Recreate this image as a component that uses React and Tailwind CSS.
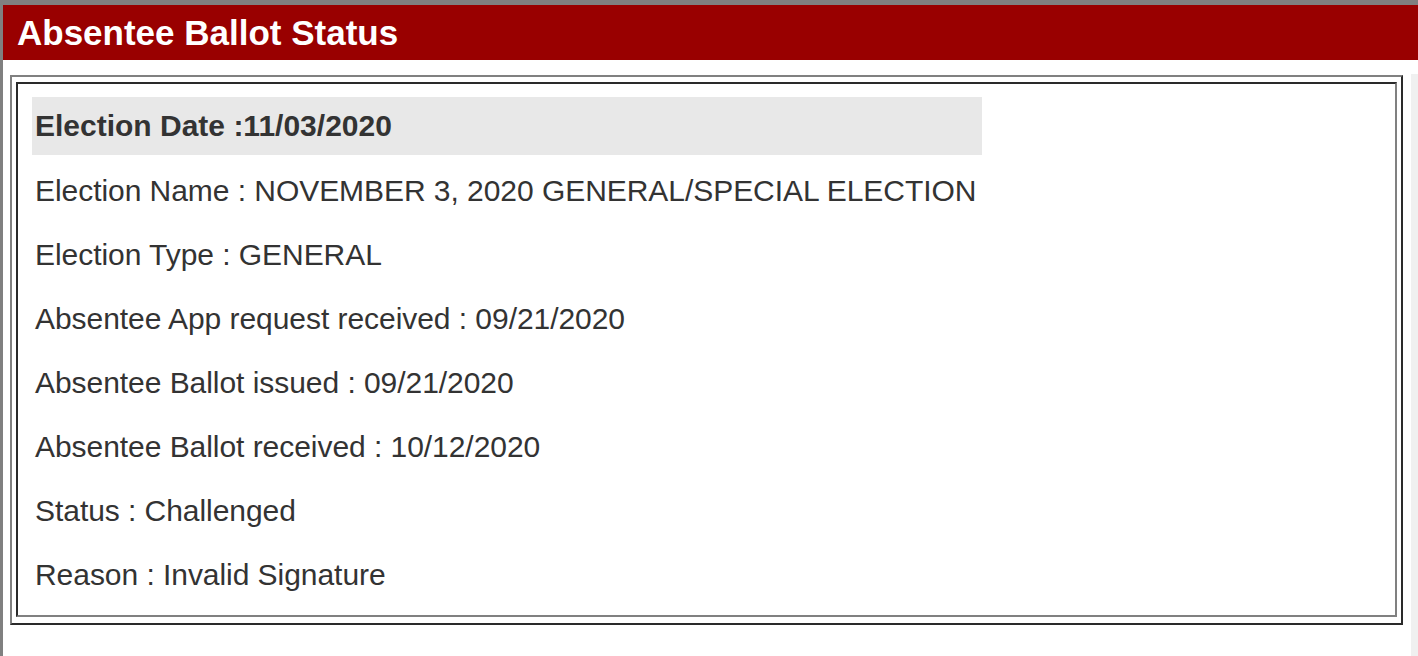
export default function App() {
    const rows = [
        'Election Name : NOVEMBER 3, 2020 GENERAL/SPECIAL ELECTION',
        'Election Type : GENERAL',
        'Absentee App request received : 09/21/2020',
        'Absentee Ballot issued : 09/21/2020',
        'Absentee Ballot received : 10/12/2020',
        'Status : Challenged',
        'Reason : Invalid Signature',
    ];

    return (
        <div
            className="h-[656px] w-full bg-white border-l-[3px] border-t-[5px] border-[#808080] flex flex-col overflow-hidden"
            style={{ fontFamily: '"Liberation Sans", Arial, sans-serif' }}
        >
            {/* Title bar */}
            <div className="h-[55px] shrink-0 bg-[#990000] pl-[14px]">
                <h1 className="text-[35px] leading-[55px] font-bold text-white">Absentee Ballot Status</h1>
            </div>

            <div className="flex flex-1">
                <div className="flex-1 pl-[7px] pt-[15px] pr-[8px]">
                    {/* Outer table */}
                    <div className="border-2 border-t-[#808080] border-l-[#808080] border-r-[#2a2a2a] border-b-[#2a2a2a] px-[4px] pt-[5px] pb-[6px]">
                        {/* Inner cell */}
                        <div className="border-2 border-t-[#2a2a2a] border-l-[#2a2a2a] border-r-[#808080] border-b-[#808080] pl-[14px] pt-[13px] pb-[8px] text-[#333333]">
                            <div className="w-[950px] h-[58px] bg-[#e8e8e8] pl-[3px] text-[30px] leading-[58px] font-bold">
                                Election Date :11/03/2020
                            </div>
                            <div className="mt-[4px]">
                                {rows.map((r) => (
                                    <div key={r} className="h-[64px] pl-[3px] text-[30px] leading-[64px] tracking-[-0.05px]">
                                        {r}
                                    </div>
                                ))}
                            </div>
                        </div>
                    </div>
                </div>
                {/* Scroll strip */}
                <div className="w-[7px] mt-[14px] bg-[#f0f0f0]" />
            </div>
        </div>
    );
}
